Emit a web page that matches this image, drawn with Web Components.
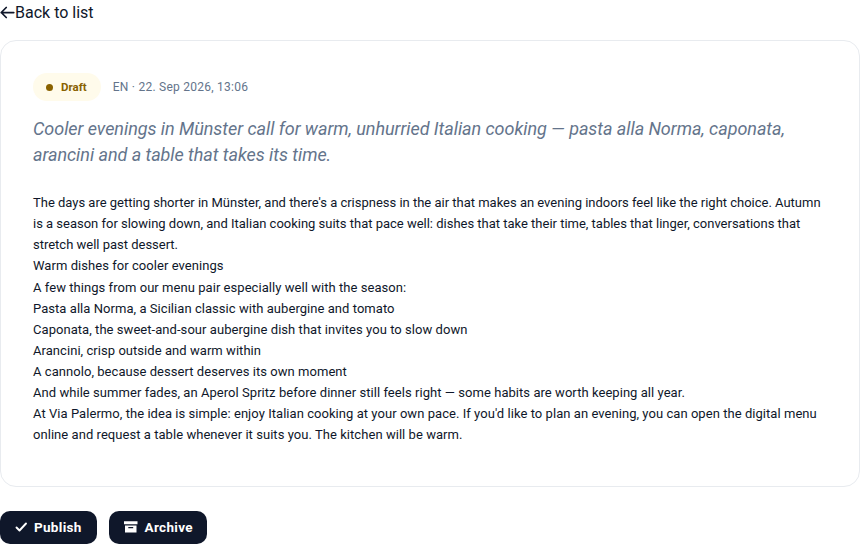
<!DOCTYPE html>
<html><head><meta charset="utf-8"><style>
html,body{margin:0;padding:0;background:#fff;overflow:hidden}
body{font-family:Roboto,sans-serif;color:#0f172a}
.tight{letter-spacing:-.01px}
</style></head><body>
<template id="t-page"><style>
:host{display:flex;flex-direction:column;width:860px;height:544px;box-sizing:border-box;overflow:hidden}
.actions{display:flex;gap:12px;margin-top:24px}
</style><slot name="back"></slot><slot name="card"></slot><div class="actions"><slot name="actions"></slot></div></template>
<template id="t-back"><style>
:host{display:flex;align-items:center;box-sizing:border-box;height:24px;padding-top:1px;font:16px/23px Roboto,sans-serif;color:#0f172a}
svg{width:15px;height:15px;flex:none;margin-top:-1px}
</style><svg viewBox="0 0 24 24" fill="none" stroke="currentColor" stroke-width="2.8" stroke-linecap="round" stroke-linejoin="round"><path d="M22 12H2M10 4l-8 8 8 8"/></svg><slot></slot></template>
<template id="t-card"><style>
:host{display:block;box-sizing:border-box;height:447px;margin-top:16px;border:1px solid #e8ebef;border-radius:16px;padding:32px;background:#fff}
.meta{display:flex;align-items:center;gap:12px;height:28px;font:12px/16px Roboto,sans-serif;letter-spacing:.25px;color:#64748b}
.lead{font:italic 18px/26px Roboto,sans-serif;letter-spacing:-.05px;color:#64748b;margin:15px 0 24px}
.body{font:13px/21.125px Roboto,sans-serif;letter-spacing:.05px;color:#0f172a}
</style><div class="meta"><slot name="badge"></slot><slot name="meta"></slot></div><div class="lead"><slot name="lead"></slot></div><div class="body"><slot></slot></div></template>
<template id="t-badge"><style>
:host{display:inline-flex;align-items:center;gap:8px;height:28px;padding:0 14px 0 13px;border-radius:14px;background:#fffbeb;color:#8a6200;font:700 11.5px Roboto,sans-serif;letter-spacing:0}
i{width:7px;height:7px;border-radius:50%;background:#8a6200}
</style><i></i><slot></slot></template>
<template id="t-btn"><style>
:host{display:inline-flex;align-items:center;gap:6px;box-sizing:border-box;height:33px;padding:0 15px 2px;border-radius:10px;background:#0f172a;color:#fff;font:700 13.5px Roboto,sans-serif;letter-spacing:.3px}
:host([tight]){padding-right:14px}
::slotted(svg){height:14px;flex:none}
</style><slot name="icon"></slot><slot></slot></template>
<script>
for(const [n,t] of [['app-page','t-page'],['back-link','t-back'],['post-card','t-card'],['status-badge','t-badge'],['action-btn','t-btn']]){
customElements.define(n,class extends HTMLElement{constructor(){super();this.attachShadow({mode:'open'}).append(document.getElementById(t).content.cloneNode(true))}})}
</script>
<app-page>
<back-link slot="back">Back to list</back-link>
<post-card slot="card">
<status-badge slot="badge">Draft</status-badge><span slot="meta">EN · 22. Sep 2026, 13:06</span>
<span slot="lead">Cooler evenings in Münster call for warm, unhurried Italian cooking — pasta alla Norma, caponata, arancini and a table that takes its time.</span>
<span class="tight">The days are getting shorter in Münster, and there's a crispness in the air that makes an evening indoors feel like the right choice. Autumn is a season for slowing down, and Italian cooking suits that pace well: dishes that take their time, tables that linger, conversations that stretch well past dessert.</span><br>
Warm dishes for cooler evenings<br>
A few things from our menu pair especially well with the season:<br>
Pasta alla Norma, a Sicilian classic with aubergine and tomato<br>
Caponata, the sweet-and-sour aubergine dish that invites you to slow down<br>
Arancini, crisp outside and warm within<br>
A cannolo, because dessert deserves its own moment<br>
And while summer fades, an Aperol Spritz before dinner still feels right — some habits are worth keeping all year.<br>
At Via Palermo, the idea is simple: enjoy Italian cooking at your own pace. If you'd like to plan an evening, you can open the digital menu online and request a table whenever it suits you. The kitchen will be warm.
</post-card>
<action-btn slot="actions"><svg slot="icon" width="13" viewBox="0 0 13 14" fill="none" stroke="currentColor" stroke-width="1.9" stroke-linecap="round" stroke-linejoin="round"><path d="M1.5 7.5L4.5 10.5L11 3.5"/></svg>Publish</action-btn>
<action-btn slot="actions" tight><svg slot="icon" width="15" viewBox="0 0 15 14"><path fill="currentColor" fill-rule="evenodd" d="M0 1.200h13.500v3.100H0zM1 5.400h11.500v7.200H1zM4.300 6.900v1.400h4.900V6.900z"/></svg>Archive</action-btn>
</app-page>
</body></html>
